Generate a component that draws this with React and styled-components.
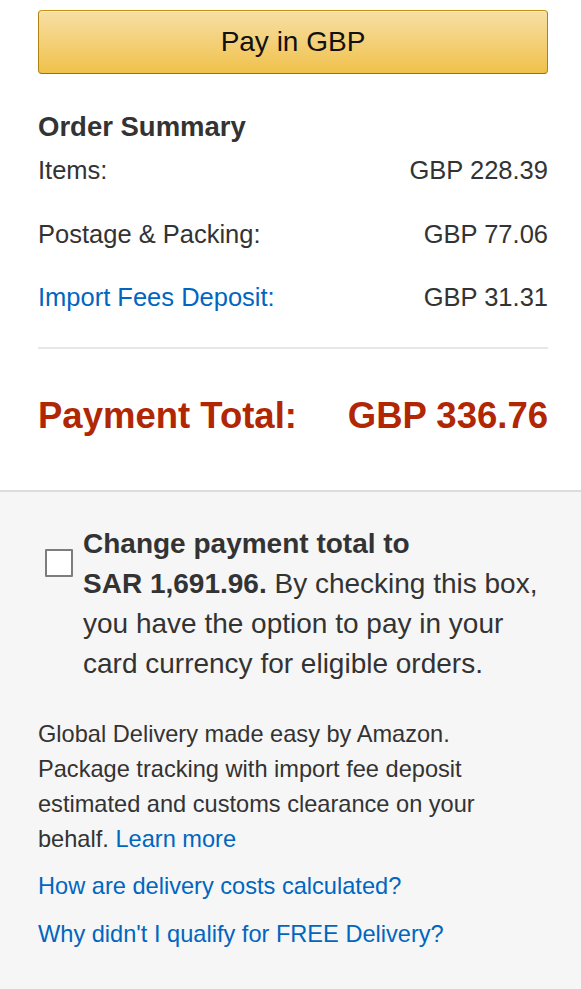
import React from 'react';
import styled, { createGlobalStyle } from 'styled-components';

const Global = createGlobalStyle`
    body {
        margin: 0;
        background: #fff;
        font-family: "Liberation Sans", Arial, sans-serif;
        color: #333;
    }
`;

const Page = styled.div`
    width: 581px;
    min-height: 989px;
    display: flex;
    flex-direction: column;
    background: #f6f6f6;
`;

const Top = styled.div`
    background: #fff;
    padding: 10px 33px 52px 38px;
`;

const PayButton = styled.button`
    display: block;
    width: 100%;
    height: 64px;
    border: 1px solid #a88734;
    border-color: #c89411 #b0820f #99710d;
    border-radius: 4px;
    background: linear-gradient(to bottom, #f7dfa5, #f0c14b);
    box-shadow: 0 1px 0 rgba(255, 255, 255, 0.4) inset;
    font-family: "Liberation Sans", Arial, sans-serif;
    font-size: 28px;
    color: #111;
    cursor: pointer;
`;

const Title = styled.h2`
    margin: 36px 0 9px;
    font-size: 27.5px;
    line-height: 34px;
    font-weight: bold;
    color: #333;
`;

const Row = styled.div`
    display: flex;
    justify-content: space-between;
    font-size: 25.5px;
    line-height: 34px;
    margin-bottom: 29.5px;
    color: #333;

    &:last-of-type {
        margin-bottom: 0;
    }
`;

const Link = styled.a`
    color: #0066c0;
    text-decoration: none;
`;

const Divider = styled.hr`
    margin: 33px 0 45px;
    border: 0;
    height: 2px;
    background: #e7e7e7;
`;

const Total = styled.div`
    display: flex;
    justify-content: space-between;
    font-size: 36.5px;
    line-height: 44px;
    font-weight: bold;
    color: #b12704;
`;

const Bottom = styled.div`
    flex: 1;
    border-top: 2px solid #ddd;
    padding: 32px 33px 40px 38px;
`;

const CheckLabel = styled.label`
    display: flex;
    align-items: flex-start;
    gap: 10px;
    padding-left: 7px;
    font-size: 28px;
    line-height: 40px;
    color: #333;
`;

const Box = styled.span`
    flex: none;
    width: 24px;
    height: 24px;
    margin-top: 25px;
    border: 2px solid #7d7d7d;
    border-radius: 1px;
    background: #fff;
`;

const Amount = styled.b`
    white-space: nowrap;
`;

const Info = styled.p`
    margin: 33px 0 12px;
    max-width: 480px;
    font-size: 23.6px;
    line-height: 35px;
    color: #333;
`;

const HelpLink = styled(Link)`
    display: block;
    font-size: 23.6px;
    line-height: 35px;
    margin-bottom: 13px;
`;

const rows = [
    { label: 'Items:', value: 'GBP 228.39' },
    { label: 'Postage & Packing:', value: 'GBP 77.06' },
    { label: 'Import Fees Deposit:', value: 'GBP 31.31', link: true },
];

const App = () => (
    <Page>
        <Global />
        <Top>
            <PayButton>Pay in GBP</PayButton>
            <Title>Order Summary</Title>
            {rows.map(r => (
                <Row key={r.label}>
                    {r.link ? <Link href="#">{r.label}</Link> : <span>{r.label}</span>}
                    <span>{r.value}</span>
                </Row>
            ))}
            <Divider />
            <Total>
                <span>Payment Total:</span>
                <span>GBP 336.76</span>
            </Total>
        </Top>
        <Bottom>
            <CheckLabel>
                <Box />
                <span>
                    <b>Change payment total to</b> <Amount>SAR 1,691.96.</Amount> By checking this box,
                    you have the option to pay in your card currency for eligible orders.
                </span>
            </CheckLabel>
            <Info>
                Global Delivery made easy by Amazon. Package tracking with import fee deposit
                estimated and customs clearance on your behalf. <Link href="#">Learn more</Link>
            </Info>
            <HelpLink href="#">How are delivery costs calculated?</HelpLink>
            <HelpLink href="#">Why didn't I qualify for FREE Delivery?</HelpLink>
        </Bottom>
    </Page>
);

export default App;
